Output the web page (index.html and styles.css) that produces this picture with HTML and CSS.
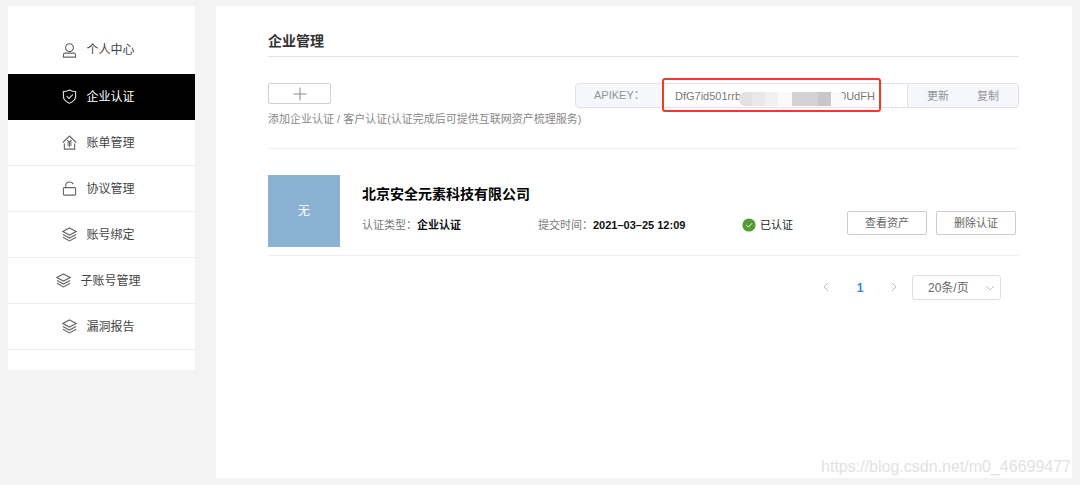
FILE: index.html
```
<!DOCTYPE html>
<html lang="zh-CN">
<head>
<meta charset="utf-8">
<title>企业管理</title>
<link rel="stylesheet" href="styles.css">
</head>
<body>
<svg class="defs" width="0" height="0" aria-hidden="true">
  <symbol id="layers" viewBox="0 0 16 16"><path d="M8 1 15 4.800 8 8.600 1 4.800ZM1 8 8 11.800l7-3.800M1 11 8 14.800l7-3.800"/></symbol>
</svg>
<div class="page">
  <nav class="sidebar">
    <a class="item" href="#"><svg class="icon" viewBox="0 0 16 16"><circle cx="8" cy="5" r="4.200"/><path d="M3.500 10.800h9q2 0 2 2v2.200h-13v-2.200q0-2 2-2Z"/></svg>个人中心</a>
    <a class="item active" href="#" aria-current="page"><svg class="icon" viewBox="0 0 16 16"><path d="M8 1q3 1.700 6.500 1.700V8q0 4.500-6.500 7.200Q1.500 12.500 1.500 8V2.700Q5 2.700 8 1Z"/><path d="m5 7.500 2.500 2.500L11.500 6"/></svg>企业认证</a>
    <a class="item" href="#"><svg class="icon" viewBox="0 0 16 16"><path d="M.8 8 8 1.200 15.200 8M5 15H2.500V9M11 15h2.500V9M5 15h6M5.700 5.500 8 8l2.300-2.500M8 8v5M5.500 8.500h5M5.500 10.700h5"/></svg>账单管理</a>
    <a class="item" href="#"><svg class="icon" viewBox="0 0 16 16"><rect x="1.500" y="7" width="13" height="8" rx="1"/><path d="M4 7V5q0-4 4-4 3 0 4 2.500"/></svg>协议管理</a>
    <a class="item" href="#"><svg class="icon"><use href="#layers"/></svg>账号绑定</a>
    <a class="item" href="#"><svg class="icon"><use href="#layers"/></svg>子账号管理</a>
    <a class="item" href="#"><svg class="icon"><use href="#layers"/></svg>漏洞报告</a>
  </nav>
  <main class="main">
    <h1 class="heading">企业管理</h1>
    <section class="tools">
      <div class="add">
        <button class="add-button" type="button" aria-label="添加"><svg class="plus" viewBox="0 0 14 14"><path d="M7 .5v13M.5 7h13"/></svg></button>
        <p class="hint">添加企业认证 / 客户认证(认证完成后可提供互联网资产梳理服务)</p>
      </div>
      <div class="key">
        <label class="key-label" for="apikey">APIKEY：</label>
        <div class="key-field">
          <input class="key-input" id="apikey" type="text" readonly value="DfG7id501rrb&emsp;&emsp;&emsp;&emsp;&emsp;&emsp;&emsp;&emsp;&emsp;0UdFH">
          <span class="mask"><i></i><i></i><i></i><i></i><i></i><i></i><i></i></span>
          <span class="highlight"></span>
        </div>
        <div class="key-actions">
          <button class="key-button" type="button">更新</button>
          <button class="key-button" type="button">复制</button>
        </div>
      </div>
    </section>
    <article class="company">
      <div class="avatar">无</div>
      <div class="details">
        <h2 class="name">北京安全元素科技有限公司</h2>
        <div class="meta">
          <span class="type">认证类型：<b>企业认证</b></span>
          <span class="time">提交时间：<b>2021–03–25 12:09</b></span>
          <span class="status"><svg class="check" viewBox="0 0 14 14"><circle cx="7" cy="7" r="6.600"/><path d="m4 7 2.200 2.200L10 5.300"/></svg>已认证</span>
        </div>
      </div>
      <div class="actions">
        <button class="action" type="button">查看资产</button>
        <button class="action" type="button">删除认证</button>
      </div>
    </article>
    <div class="pager">
      <button class="page-button" type="button" aria-label="上一页"><svg class="arrow" viewBox="0 0 10 10"><path d="M7 1 3 5l4 4"/></svg></button>
      <button class="page-button current" type="button">1</button>
      <button class="page-button" type="button" aria-label="下一页"><svg class="arrow" viewBox="0 0 10 10"><path d="m3 1 4 4-4 4"/></svg></button>
      <div class="size">
        <select class="size-select" aria-label="每页条数"><option>20条/页</option></select>
        <svg class="arrow size-arrow" viewBox="0 0 10 10"><path d="m1 3 4 4 4-4"/></svg>
      </div>
    </div>
    <div class="watermark">https://blog.csdn.net/m0_46699477</div>
  </main>
</div>
</body>
</html>
```
FILE: styles.css
```
* {
  box-sizing: border-box;
}

body {
  margin: 0;
  background: #f3f3f3;
  color: #333;
  font: 11px/16px "Liberation Sans", "Noto Sans CJK SC", sans-serif;
}

button,
input,
select {
  margin: 0;
  padding: 0;
  font: inherit;
  color: inherit;
  background: none;
  border: 0;
}

svg {
  fill: none;
  stroke: currentColor;
  flex: none;
}

.defs {
  position: absolute;
}

.page {
  display: flex;
  align-items: flex-start;
  gap: 21px;
  min-height: 100vh;
  padding: 6px 8px 7px;
}

.sidebar {
  flex: 0 0 187px;
  padding: 21px 0 20px;
  background: #fff;
}

.item {
  display: flex;
  align-items: center;
  justify-content: center;
  gap: 9px;
  height: 46px;
  padding-right: 6px;
  border-bottom: 1px solid #ececec;
  color: #444;
  font-size: 12px;
  text-decoration: none;
}

.item:first-child {
  height: 47px;
  border-color: #fff;
}

.active {
  border-color: #000;
  background: #000;
  color: #fff;
}

.icon {
  width: 15px;
  height: 15px;
  color: #666;
  stroke-width: 1.2;
}

.active .icon {
  color: #ddd;
}

.main {
  position: relative;
  flex: 1;
  align-self: stretch;
  padding: 25px 53px 40px 52px;
  background: #fff;
}

.heading {
  margin: 0;
  padding-bottom: 5px;
  border-bottom: 1px solid #e3e3e3;
  font-size: 14px;
  line-height: 20px;
  font-weight: 600;
}

.tools {
  display: flex;
  justify-content: space-between;
  height: 92px;
  padding-top: 26px;
  border-bottom: 1px solid #f1f1f1;
}

.add {
  flex: 0 0 auto;
  width: 306px;
}

.add-button {
  display: flex;
  align-items: center;
  justify-content: center;
  width: 63px;
  height: 21px;
  border: 1px solid #d0d0d0;
  border-radius: 2px;
  color: #888;
}

.plus {
  width: 14px;
  height: 14px;
}

.hint {
  margin: 7px 0 0;
  color: #888;
  white-space: nowrap;
}

.key {
  display: flex;
  flex: 0 0 444px;
  height: 25px;
  border: 1px solid #e0e4ea;
  border-radius: 4px;
  background: #f5f7fa;
  color: #909399;
}

.key-label {
  width: 86px;
  padding-left: 18px;
  line-height: 23px;
}

.key-field {
  position: relative;
  flex: 1;
  border-right: 1px solid #e0e4ea;
  border-left: 1px solid #e0e4ea;
  background: #fff;
}

.key-input {
  width: 100%;
  height: 23px;
  padding-left: 12px;
  color: #777;
}

.mask {
  position: absolute;
  top: 8px;
  left: 76px;
  display: flex;
  width: 105px;
  height: 14px;
  overflow: hidden;
  border-radius: 6px;
}

.mask i {
  flex: 1;
  background: #e9e9e9;
}

.mask i:nth-child(1) {
  background: #e2e2e2;
}

.mask i:nth-child(3) {
  background: #f1f1f1;
}

.mask i:nth-child(4) {
  background: #fafafa;
}

.mask i:nth-child(5) {
  flex-grow: 2;
  background: #d2d1d3;
}

.mask i:nth-child(6) {
  background: #c7c6c8;
}

.mask i:nth-child(7) {
  background: #fafafa;
}

.highlight {
  position: absolute;
  top: -6px;
  right: 26px;
  bottom: -5px;
  left: -1px;
  border: 2px solid #f33b1d;
  border-radius: 3px;
}

.key-actions {
  display: flex;
  gap: 28px;
  padding: 0 19px;
}

.company {
  display: flex;
  align-items: flex-start;
  height: 107px;
  padding-top: 26px;
  border-bottom: 1px solid #f1f1f1;
}

.avatar {
  flex: none;
  width: 72px;
  height: 72px;
  background: #8bb1d3;
  color: #fff;
  font-size: 12px;
  line-height: 72px;
  text-align: center;
}

.details {
  flex: 1;
  padding: 9px 0 0 22px;
}

.name {
  margin: 0;
  color: #000;
  font-size: 14px;
  line-height: 20px;
  font-weight: 600;
}

.meta {
  display: flex;
  align-items: center;
  margin-top: 13px;
  color: #777;
  white-space: nowrap;
}

.meta b {
  color: #111;
  font-weight: 600;
}

.type {
  width: 176px;
}

.time {
  width: 204px;
}

.status {
  display: flex;
  align-items: center;
  gap: 4px;
  color: #222;
}

.check {
  width: 14px;
  height: 14px;
}

.check circle {
  fill: #529b35;
  stroke: none;
}

.check path {
  stroke: #fff;
}

.actions {
  display: flex;
  gap: 9px;
  padding: 36px 3px 0 0;
}

.action {
  width: 80px;
  height: 24px;
  border: 1px solid #ccc;
  border-radius: 2px;
  color: #666;
}

.pager {
  display: flex;
  align-items: center;
  justify-content: flex-end;
  padding: 19px 18px 0 0;
}

.page-button {
  width: 34px;
  height: 25px;
  color: #b6bac2;
}

.current {
  color: #2f86f6;
  font-size: 12px;
  font-weight: 600;
}

.arrow {
  width: 10px;
  height: 10px;
}

.size {
  position: relative;
  width: 89px;
  margin-left: 1px;
}

.size-select {
  width: 100%;
  height: 25px;
  padding-left: 15px;
  border: 1px solid #dcdfe6;
  border-radius: 3px;
  appearance: none;
  color: #666;
  font-size: 12px;
}

.size-arrow {
  position: absolute;
  top: 8px;
  right: 6px;
  color: #c0c4cc;
}

.watermark {
  position: absolute;
  right: 1px;
  bottom: 2px;
  color: #e2e2e2;
  font: 16px/18px "Liberation Sans", sans-serif;
}
```
